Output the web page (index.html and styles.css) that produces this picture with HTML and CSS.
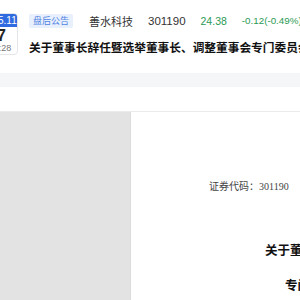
FILE: index.html
```html
<!DOCTYPE html>
<html lang="zh">
<head>
<meta charset="utf-8">
<link rel="stylesheet" href="styles.css">
</head>
<body>
<div class="header">
  <div class="date-card">
    <div class="date-month">2025.11</div>
    <div class="date-day">17</div>
    <div class="date-time">16:28</div>
  </div>
  <div class="info">
    <div class="meta">
      <span class="tag">盘后公告</span>
      <span class="name">善水科技</span>
      <span class="code">301190</span>
      <span class="price">24.38</span>
      <span class="change">-0.12(-0.49%)</span>
    </div>
    <div class="title">关于董事长辞任暨选举董事长、调整董事会专门委员会委员的公告</div>
  </div>
</div>
<div class="band"></div>
<div class="spacer"></div>
<div class="viewer">
  <div class="sidebar"></div>
  <div class="page">
    <div class="doc-code">证券代码：301190</div>
    <div class="doc-title">关于董事长辞任暨选举董事长、调整董事会</div>
    <div class="doc-sub">专门委员会委员的公告</div>
  </div>
</div>
</body>
</html>
```
FILE: styles.css
```css
html, body {
  margin: 0;
  padding: 0;
  background: #ffffff;
  overflow: hidden;
  width: 300px;
  height: 300px;
}
body {
  font-family: "Liberation Sans", "Noto Sans CJK SC", sans-serif;
}
.header {
  display: flex;
  align-items: flex-start;
  padding-top: 13px;
  height: 73px;
  box-sizing: border-box;
  white-space: nowrap;
  overflow: hidden;
}
.date-card {
  flex: none;
  width: 42px;
  margin-left: -24px;
  height: 42px;
  border: 1px solid #e3e5ea;
  border-radius: 4px;
  overflow: hidden;
  box-sizing: border-box;
  text-align: center;
  background: #ffffff;
}
.date-month {
  background: #2f6ae0;
  color: #ffffff;
  font-size: 10px;
  line-height: 13px;
  height: 13px;
  padding-left: 4px;
}
.date-day {
  font-size: 16px;
  font-weight: bold;
  color: #222;
  line-height: 15px;
  margin-top: 1px;
}
.date-time {
  font-size: 9px;
  color: #777;
  line-height: 10px;
  padding-left: 6px;
}
.info {
  margin-left: 11px;
  display: flex;
  flex-direction: column;
}
.meta {
  display: flex;
  align-items: center;
  height: 15px;
}
.tag {
  background: #e9f0fd;
  color: #4f83e3;
  font-size: 9px;
  line-height: 14px;
  height: 14px;
  padding: 0 4px;
  border-radius: 2px;
  width: 36px;
  text-align: center;
  font-family: "Noto Sans CJK SC", sans-serif;
}
.name {
  margin-left: 16px;
  font-size: 11px;
  color: #333;
  font-family: "Noto Sans CJK SC", sans-serif;
}
.code {
  margin-left: 15px;
  font-size: 11.5px;
  color: #333;
}
.price {
  margin-left: 15px;
  font-size: 10.5px;
  color: #2b9a55;
}
.change {
  margin-left: 15px;
  font-size: 9.8px;
  color: #2b9a55;
}
.title {
  margin-top: 12px;
  font-family: "Noto Sans CJK SC", sans-serif;
  font-weight: bold;
  font-size: 11.7px;
  line-height: 14px;
  color: #111;
}
.band {
  height: 14px;
  background: #f5f6f7;
}
.spacer {
  height: 24px;
  border-bottom: 1px solid #ebebeb;
}
.viewer {
  display: flex;
  height: 200px;
}
.sidebar {
  width: 130px;
  flex: none;
  background: #e3e3e3;
  border-right: 1px solid #dcdcdc;
}
.page {
  flex: 1;
  background: #ffffff;
  overflow: hidden;
  white-space: nowrap;
  font-family: "Liberation Serif", "Noto Sans CJK SC", serif;
  color: #111;
}
.doc-code {
  margin-top: 69px;
  padding-left: 78px;
  font-size: 10px;
  line-height: 12px;
  color: #444;
}
.doc-title {
  margin-top: 51px;
  padding-left: 134px;
  font-size: 12.5px;
  font-weight: bold;
  line-height: 15px;
}
.doc-sub {
  margin-top: 20px;
  padding-left: 154px;
  font-size: 12.5px;
  font-weight: bold;
  line-height: 15px;
}
```
